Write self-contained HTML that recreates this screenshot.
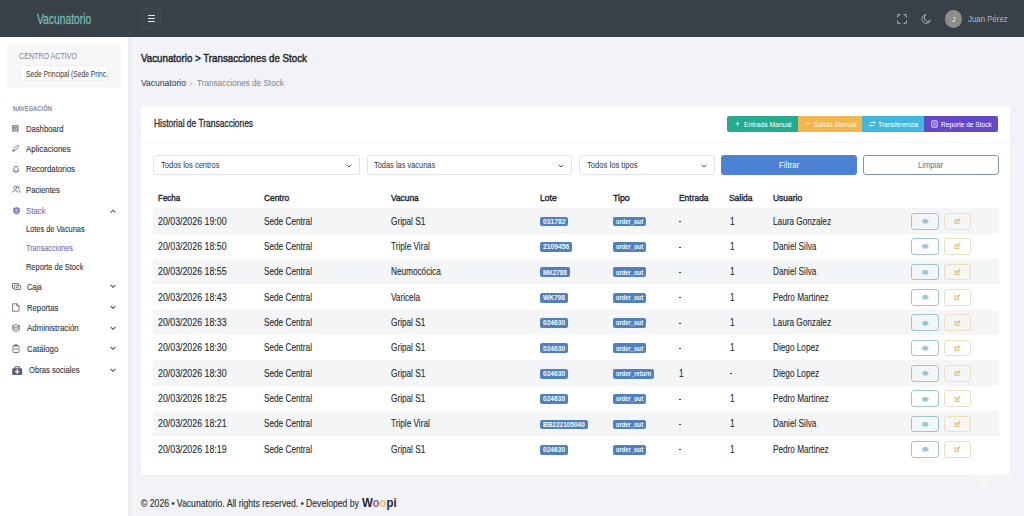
<!DOCTYPE html>
<html><head><meta charset="utf-8"><title>Vacunatorio - Transacciones de Stock</title>
<style>
html,body{margin:0;padding:0;width:1024px;height:516px;overflow:hidden;background:#f2f3f6;}
body{position:relative;font-family:"Liberation Sans",sans-serif;}
.t{position:absolute;white-space:nowrap;line-height:1;transform-origin:0 0;}
.b{position:absolute;box-sizing:border-box;}
svg.b{overflow:visible;}
</style></head><body>
<div class="b" style="left:0px;top:0px;width:1024px;height:37px;background:#38404a;"></div>
<div class="t" style="left:36.50px;top:12.23px;font-size:14.5px;color:#74bdac;-webkit-text-stroke:0.3px #74bdac;transform:scaleX(0.7116);">Vacunatorio</div>
<div class="b" style="left:141px;top:8px;width:20px;height:21px;background:#3a424c;border:1px solid #404852;border-radius:2px;box-sizing:border-box;"></div>
<div class="b" style="left:147.5px;top:14.9px;width:7px;height:1.2px;background:#e6e8ea;border-radius:1px;"></div>
<div class="b" style="left:147.5px;top:17.9px;width:7px;height:1.2px;background:#e6e8ea;border-radius:1px;"></div>
<div class="b" style="left:147.5px;top:20.9px;width:7px;height:1.2px;background:#e6e8ea;border-radius:1px;"></div>
<svg class="b" style="left:897px;top:13.6px" width="10" height="10" viewBox="0 0 10 10" fill="none" stroke="#a9aeb4" stroke-width="1.1" stroke-linecap="round">
<path d="M0.6 3V1.8Q0.6 0.6 1.8 0.6H3M7 0.6H8.2Q9.4 0.6 9.4 1.8V3M9.4 7V8.2Q9.4 9.4 8.2 9.4H7M3 9.4H1.8Q0.6 9.4 0.6 8.2V7"/></svg>
<svg class="b" style="left:921.4px;top:13.8px" width="10" height="10" viewBox="0 0 10 10" fill="none" stroke="#b3b8be" stroke-width="1.0">
<path d="M4.6 0.7A4.3 4.3 0 1 0 9.3 6.5A3.5 3.5 0 0 1 4.6 0.7Z"/></svg>
<div class="b" style="left:945px;top:10.3px;width:17.4px;height:17.4px;border-radius:50%;background:#8f8b88;"></div>
<div class="t" style="left:951.71px;top:15.95px;font-size:7.5px;color:#f5e6e2;-webkit-text-stroke:0.15px #f5e6e2;transform:scaleX(0.9000);">J</div>
<div class="t" style="left:967.70px;top:13.86px;font-size:9.5px;color:#b5bac1;transform:scaleX(0.8282);">Juan Pérez</div>
<div class="b" style="left:0px;top:37px;width:128px;height:479px;background:#ffffff;"></div>
<div class="b" style="left:128px;top:37px;width:5px;height:479px;background:linear-gradient(90deg,rgba(0,0,0,0.035),rgba(0,0,0,0));"></div>
<div class="b" style="left:7px;top:44px;width:114px;height:44px;background:#f6f7f9;border-radius:3px;"></div>
<div class="t" style="left:19.20px;top:52.86px;font-size:8.2px;color:#7c838b;transform:scaleX(0.8690);">CENTRO ACTIVO</div>
<div class="b" style="left:19.5px;top:65.3px;width:88.8px;height:16px;background:#ffffff;border:1px solid #eceef1;border-radius:2px;box-sizing:border-box;"></div>
<div class="t" style="left:25.70px;top:69.82px;font-size:8.6px;color:#30353b;transform:scaleX(0.7797);">Sede Principal (Sede Princ.</div>
<div class="t" style="left:12.70px;top:106.11px;font-size:6.6px;color:#80868d;letter-spacing:0.4px;-webkit-text-stroke:0.25px #80868d;transform:scaleX(0.8270);">NAVEGACIÓN</div>
<div class="t" style="left:26.40px;top:124.92px;font-size:8.6px;color:#2f343b;-webkit-text-stroke:0.1px #2f343b;transform:scaleX(0.8913);">Dashboard</div>
<div class="t" style="left:26.40px;top:145.02px;font-size:8.6px;color:#2f343b;-webkit-text-stroke:0.1px #2f343b;transform:scaleX(0.9278);">Aplicaciones</div>
<div class="t" style="left:26.40px;top:165.42px;font-size:8.6px;color:#2f343b;-webkit-text-stroke:0.1px #2f343b;transform:scaleX(0.9152);">Recordatorios</div>
<div class="t" style="left:26.40px;top:186.22px;font-size:8.6px;color:#2f343b;-webkit-text-stroke:0.1px #2f343b;transform:scaleX(0.9002);">Pacientes</div>
<div class="t" style="left:26.40px;top:206.92px;font-size:8.6px;color:#7670b0;-webkit-text-stroke:0.1px #7670b0;transform:scaleX(0.9159);">Stack</div>
<div class="t" style="left:26.40px;top:224.79px;font-size:8.4px;color:#2f343b;-webkit-text-stroke:0.1px #2f343b;transform:scaleX(0.8825);">Lotes de Vacunas</div>
<div class="t" style="left:26.40px;top:243.79px;font-size:8.4px;color:#7670b0;-webkit-text-stroke:0.1px #7670b0;transform:scaleX(0.8653);">Transacciones</div>
<div class="t" style="left:26.40px;top:262.69px;font-size:8.4px;color:#2f343b;-webkit-text-stroke:0.1px #2f343b;transform:scaleX(0.8875);">Reporte de Stock</div>
<div class="t" style="left:26.60px;top:282.92px;font-size:8.6px;color:#2f343b;-webkit-text-stroke:0.1px #2f343b;transform:scaleX(0.8424);">Caja</div>
<div class="t" style="left:26.60px;top:303.82px;font-size:8.6px;color:#2f343b;-webkit-text-stroke:0.1px #2f343b;transform:scaleX(0.8969);">Reportas</div>
<div class="t" style="left:26.60px;top:324.42px;font-size:8.6px;color:#2f343b;-webkit-text-stroke:0.1px #2f343b;transform:scaleX(0.9184);">Administración</div>
<div class="t" style="left:26.60px;top:345.22px;font-size:8.6px;color:#2f343b;-webkit-text-stroke:0.1px #2f343b;transform:scaleX(0.9092);">Catálogo</div>
<div class="t" style="left:28.80px;top:366.42px;font-size:8.6px;color:#2f343b;-webkit-text-stroke:0.1px #2f343b;transform:scaleX(0.8878);">Obras sociales</div>
<svg class="b" style="left:12.4px;top:124.9px" width="7" height="7" viewBox="0 0 7 7"><rect x="0" y="0" width="6.6" height="6.8" rx="0.7" fill="#8a8f95"/><path d="M1.5 1.6H5.1M1.5 3.4H2.6M3.8 3.4H5.1M1.5 5.2H5.1" stroke="#e6e8ea" stroke-width="0.7"/></svg>
<svg class="b" style="left:12px;top:144px" width="8" height="8" viewBox="0 0 8 8" fill="none" stroke="#6c7279" stroke-width="0.9" stroke-linecap="round" stroke-linejoin="round"><path d="M1 7L2 4.5L5.5 1L7 2.5L3.5 6Z M1 7L2.8 6.4"/></svg>
<svg class="b" style="left:12px;top:165px" width="8" height="8" viewBox="0 0 8 8" fill="none" stroke="#6c7279" stroke-width="0.9" stroke-linecap="round" stroke-linejoin="round"><path d="M1.2 6.2H6.8L6 5V3.3A2 2 0 0 0 2 3.3V5Z M3.2 7.2H4.8"/></svg>
<svg class="b" style="left:12px;top:185px" width="9" height="8" viewBox="0 0 9 8" fill="none" stroke="#6c7279" stroke-width="0.9" stroke-linecap="round" stroke-linejoin="round"><circle cx="3.3" cy="2.4" r="1.5"/><path d="M0.8 7.2A2.6 2.6 0 0 1 5.8 7.2"/><path d="M5.6 1A1.4 1.4 0 0 1 6 3.8M6.8 5A2.2 2.2 0 0 1 8.2 7.2"/></svg>
<svg class="b" style="left:12.5px;top:207px" width="7" height="7.5" viewBox="0 0 7 7.5"><path d="M3.5 0L6.8 1.3V4.2C6.8 6 5.2 7 3.5 7.5C1.8 7 0.2 6 0.2 4.2V1.3Z" fill="#8480c4"/><circle cx="3.5" cy="3.2" r="1.1" fill="#d4d0f0"/><path d="M1.8 5.4H5.2" stroke="#d4d0f0" stroke-width="0.7"/></svg>
<svg class="b" style="left:11.5px;top:282.5px" width="9" height="7" viewBox="0 0 9 7" fill="none" stroke="#6a6f75" stroke-width="0.9"><rect x="0.5" y="0.5" width="5.9" height="4.9" rx="0.5"/><rect x="2.3" y="2.2" width="6.2" height="4.3" rx="0.5" fill="#ffffff"/><circle cx="5.4" cy="4.35" r="0.9"/></svg>
<svg class="b" style="left:12px;top:303px" width="8" height="9" viewBox="0 0 8 9" fill="none" stroke="#6c7279" stroke-width="0.9" stroke-linecap="round" stroke-linejoin="round"><path d="M1 0.8H4.8L7 3V8.2H1Z M4.8 0.8V3H7"/></svg>
<svg class="b" style="left:12px;top:324px" width="8" height="8" viewBox="0 0 8 8" fill="none" stroke="#6c7279" stroke-width="0.9" stroke-linecap="round" stroke-linejoin="round"><ellipse cx="4" cy="2" rx="3.2" ry="1.3"/><path d="M0.8 2V6C0.8 6.8 2.2 7.3 4 7.3S7.2 6.8 7.2 6V2 M0.8 4C0.8 4.8 2.2 5.3 4 5.3S7.2 4.8 7.2 4"/></svg>
<svg class="b" style="left:12px;top:344px" width="8" height="9" viewBox="0 0 8 9" fill="none" stroke="#6c7279" stroke-width="0.9" stroke-linecap="round" stroke-linejoin="round"><rect x="1" y="1.5" width="6" height="7" rx="0.6"/><path d="M2.8 0.8H5.2V2.2H2.8Z M2.5 5H5.5"/></svg>
<svg class="b" style="left:11.8px;top:365.8px" width="10.4" height="9.2" viewBox="0 0 10.4 9.2"><path d="M2.4 2.2V1.2Q2.4 0.2 3.4 0.2H7Q8 0.2 8 1.2V2.2H9.4Q10.2 2.2 10.2 3V8.2Q10.2 9 9.4 9H1Q0.2 9 0.2 8.2V3Q0.2 2.2 1 2.2Z M3.4 1.2V2.2H7V1.2Z" fill="#5b606a" fill-rule="evenodd"/><path d="M5.2 3.3V8M3.1 5.65H7.3" stroke="#eef0f4" stroke-width="1.3"/></svg>
<svg class="b" style="left:109.5px;top:209.3px" width="6" height="4.5" viewBox="0 0 6 4.5" fill="none" stroke="#555b62" stroke-width="1.05" stroke-linecap="round" stroke-linejoin="round"><path d="M0.8 3.3L3 1.1L5.2 3.3"/></svg>
<svg class="b" style="left:109.5px;top:284.1px" width="6" height="4.5" viewBox="0 0 6 4.5" fill="none" stroke="#555b62" stroke-width="1.05" stroke-linecap="round" stroke-linejoin="round"><path d="M0.8 1.2L3 3.4L5.2 1.2"/></svg>
<svg class="b" style="left:109.5px;top:305.0px" width="6" height="4.5" viewBox="0 0 6 4.5" fill="none" stroke="#555b62" stroke-width="1.05" stroke-linecap="round" stroke-linejoin="round"><path d="M0.8 1.2L3 3.4L5.2 1.2"/></svg>
<svg class="b" style="left:109.5px;top:325.6px" width="6" height="4.5" viewBox="0 0 6 4.5" fill="none" stroke="#555b62" stroke-width="1.05" stroke-linecap="round" stroke-linejoin="round"><path d="M0.8 1.2L3 3.4L5.2 1.2"/></svg>
<svg class="b" style="left:109.5px;top:346.40000000000003px" width="6" height="4.5" viewBox="0 0 6 4.5" fill="none" stroke="#555b62" stroke-width="1.05" stroke-linecap="round" stroke-linejoin="round"><path d="M0.8 1.2L3 3.4L5.2 1.2"/></svg>
<svg class="b" style="left:109.5px;top:367.5px" width="6" height="4.5" viewBox="0 0 6 4.5" fill="none" stroke="#555b62" stroke-width="1.05" stroke-linecap="round" stroke-linejoin="round"><path d="M0.8 1.2L3 3.4L5.2 1.2"/></svg>
<div class="b" style="left:133px;top:37px;width:891px;height:479px;background:#f2f3f6;"></div>
<div class="t" style="left:140.80px;top:51.78px;font-size:11.6px;color:#23272d;-webkit-text-stroke:0.45px #23272d;transform:scaleX(0.8408);">Vacunatorio &gt; Transacciones de Stock</div>
<div class="t" style="left:140.80px;top:78.47px;font-size:9.6px;color:#30353b;transform:scaleX(0.8907);">Vacunatorio</div>
<div class="t" style="left:189.40px;top:79.85px;font-size:7.5px;color:#a3a9b0;transform:scaleX(0.8219);">&gt;</div>
<div class="t" style="left:197.40px;top:78.47px;font-size:9.6px;color:#7d848c;transform:scaleX(0.8512);">Transacciones de Stock</div>
<div class="b" style="left:140.6px;top:106px;width:869.9px;height:368.6px;background:#ffffff;border-radius:3px;box-shadow:0 0 2px rgba(0,0,0,0.03);"></div>
<div class="t" style="left:153.80px;top:119.37px;font-size:10.2px;color:#2a2e34;-webkit-text-stroke:0.3px #2a2e34;transform:scaleX(0.8293);">Historial de Transacciones</div>
<div class="b" style="left:140.6px;top:142px;width:869.9px;height:1px;background:#f3f4f6;"></div>
<div class="b" style="left:727.2px;top:116px;width:70.6px;height:15.8px;background:#27a98b;border-radius:2px 0 0 2px;"></div>
<div class="b" style="left:797.8px;top:116px;width:64.2px;height:15.8px;background:#f1b64f;"></div>
<div class="b" style="left:862px;top:116px;width:62px;height:15.8px;background:#42b7de;"></div>
<div class="b" style="left:924px;top:116px;width:74.4px;height:15.8px;background:#6349c6;border-radius:0 2px 2px 0;"></div>
<div class="t" style="left:735.00px;top:120.10px;font-size:8.5px;color:#ffffff;transform:scaleX(1.0073);">+</div>
<div class="t" style="left:743.60px;top:120.53px;font-size:8.0px;color:#ffffff;transform:scaleX(0.8427);">Entrada Manual</div>
<div class="b" style="left:805.5px;top:123.3px;width:4.5px;height:0.9px;background:#fff3dc;"></div>
<div class="t" style="left:813.60px;top:120.53px;font-size:8.0px;color:#fdf3e0;transform:scaleX(0.8363);">Salida Manual</div>
<svg class="b" style="left:868.5px;top:120.5px" width="7" height="6" viewBox="0 0 7 6" fill="none" stroke="#ffffff" stroke-width="0.8" stroke-linecap="round"><path d="M0.8 4.5H5M1.8 3.5L0.8 4.5L1.8 5.5M2 1.5H6.2M5.2 0.5L6.2 1.5L5.2 2.5"/></svg>
<div class="t" style="left:878.00px;top:120.53px;font-size:8.0px;color:#ffffff;transform:scaleX(0.8269);">Transferencia</div>
<svg class="b" style="left:930.5px;top:119.8px" width="7" height="8" viewBox="0 0 7 8" fill="none" stroke="#ffffff" stroke-width="0.8"><rect x="0.8" y="0.8" width="5.4" height="6.4" rx="0.6"/><path d="M2.2 3H4.8M2.2 5H4.8"/></svg>
<div class="t" style="left:941.00px;top:120.53px;font-size:8.0px;color:#ffffff;transform:scaleX(0.8218);">Reporte de Stock</div>
<div class="b" style="left:153.2px;top:155.2px;width:206.5px;height:19.5px;background:#ffffff;border:1px solid #dfe2e6;border-radius:3px;box-sizing:border-box;"></div>
<div class="t" style="left:160.50px;top:161.32px;font-size:8.6px;color:#30353b;transform:scaleX(0.8756);">Todos los centros</div>
<svg class="b" style="left:346.2px;top:163.5px" width="6" height="4" viewBox="0 0 6 4" fill="none" stroke="#3a3f45" stroke-width="0.9" stroke-linecap="round" stroke-linejoin="round"><path d="M1 1L3 3L5 1"/></svg>
<div class="b" style="left:366.5px;top:155.2px;width:205.3px;height:19.5px;background:#ffffff;border:1px solid #dfe2e6;border-radius:3px;box-sizing:border-box;"></div>
<div class="t" style="left:373.80px;top:161.32px;font-size:8.6px;color:#30353b;transform:scaleX(0.8650);">Todas las vacunas</div>
<svg class="b" style="left:558.3px;top:163.5px" width="6" height="4" viewBox="0 0 6 4" fill="none" stroke="#3a3f45" stroke-width="0.9" stroke-linecap="round" stroke-linejoin="round"><path d="M1 1L3 3L5 1"/></svg>
<div class="b" style="left:579.2px;top:155.2px;width:135.6px;height:19.5px;background:#ffffff;border:1px solid #dfe2e6;border-radius:3px;box-sizing:border-box;"></div>
<div class="t" style="left:586.50px;top:161.32px;font-size:8.6px;color:#30353b;transform:scaleX(0.8877);">Todos los tipos</div>
<svg class="b" style="left:701.3px;top:163.5px" width="6" height="4" viewBox="0 0 6 4" fill="none" stroke="#3a3f45" stroke-width="0.9" stroke-linecap="round" stroke-linejoin="round"><path d="M1 1L3 3L5 1"/></svg>
<div class="b" style="left:721.2px;top:155.1px;width:135.4px;height:19.8px;background:#4c82d2;border-radius:3px;"></div>
<div class="t" style="left:778.70px;top:161.45px;font-size:8.8px;color:#ffffff;transform:scaleX(0.9072);">Filtrar</div>
<div class="b" style="left:863.1px;top:155.1px;width:135.7px;height:19.8px;background:#ffffff;border:1px solid #7f96a8;border-radius:3px;box-sizing:border-box;"></div>
<div class="t" style="left:918.00px;top:161.45px;font-size:8.8px;color:#6a8396;-webkit-text-stroke:0.1px #6a8396;transform:scaleX(0.8664);">Limpiar</div>
<div class="t" style="left:157.70px;top:193.04px;font-size:9.4px;color:#24282e;-webkit-text-stroke:0.4px #24282e;transform:scaleX(0.8536);">Fecha</div>
<div class="t" style="left:263.60px;top:193.04px;font-size:9.4px;color:#24282e;-webkit-text-stroke:0.4px #24282e;transform:scaleX(0.8932);">Centro</div>
<div class="t" style="left:390.50px;top:193.04px;font-size:9.4px;color:#24282e;-webkit-text-stroke:0.4px #24282e;transform:scaleX(0.8915);">Vacuna</div>
<div class="t" style="left:540.30px;top:193.04px;font-size:9.4px;color:#24282e;-webkit-text-stroke:0.4px #24282e;transform:scaleX(0.9128);">Lote</div>
<div class="t" style="left:612.90px;top:193.04px;font-size:9.4px;color:#24282e;-webkit-text-stroke:0.4px #24282e;transform:scaleX(0.9310);">Tipo</div>
<div class="t" style="left:678.50px;top:193.04px;font-size:9.4px;color:#24282e;-webkit-text-stroke:0.4px #24282e;transform:scaleX(0.8990);">Entrada</div>
<div class="t" style="left:729.20px;top:193.04px;font-size:9.4px;color:#24282e;-webkit-text-stroke:0.4px #24282e;transform:scaleX(0.8993);">Salida</div>
<div class="t" style="left:772.60px;top:193.04px;font-size:9.4px;color:#24282e;-webkit-text-stroke:0.4px #24282e;transform:scaleX(0.9045);">Usuario</div>
<div class="b" style="left:153.4px;top:208.2px;width:845.4px;height:25.35px;background:#f4f5f7;"></div>
<div class="t" style="left:157.60px;top:216.60px;font-size:10.4px;color:#24282d;-webkit-text-stroke:0.1px #24282d;transform:scaleX(0.8473);">20/03/2026 19:00</div>
<div class="t" style="left:263.70px;top:216.60px;font-size:10.4px;color:#24282d;-webkit-text-stroke:0.1px #24282d;transform:scaleX(0.7907);">Sede Central</div>
<div class="t" style="left:390.70px;top:216.60px;font-size:10.4px;color:#24282d;-webkit-text-stroke:0.1px #24282d;transform:scaleX(0.7907);">Gripal S1</div>
<div class="b" style="left:539.8px;top:216.7px;width:28.4px;height:9.8px;background:#5181bc;border-radius:2px;"></div>
<div class="t" style="left:542.80px;top:218.94px;font-size:6.8px;color:#f4f8ff;font-weight:bold;transform:scaleX(0.9871);">031782</div>
<div class="b" style="left:612.6px;top:216.7px;width:33.1px;height:9.8px;background:#5181bc;border-radius:2px;"></div>
<div class="t" style="left:615.60px;top:218.94px;font-size:6.8px;color:#f4f8ff;font-weight:bold;transform:scaleX(0.8539);">order_out</div>
<div class="b" style="left:678.8px;top:221.3px;width:2.4px;height:0.8px;background:#33373d;"></div>
<div class="t" style="left:729.60px;top:216.60px;font-size:10.4px;color:#24282d;-webkit-text-stroke:0.1px #24282d;transform:scaleX(0.7907);">1</div>
<div class="t" style="left:772.70px;top:216.60px;font-size:10.4px;color:#24282d;-webkit-text-stroke:0.1px #24282d;transform:scaleX(0.7907);">Laura Gonzalez</div>
<div class="b" style="left:911.3px;top:212.8px;width:27.5px;height:16.8px;border:1px solid #9dc6d1;border-radius:3px;box-sizing:border-box;"></div>
<svg class="b" style="left:921.8px;top:219.10px" width="6.6" height="4.6" viewBox="0 0 6.6 4.6"><ellipse cx="3.3" cy="2.3" rx="2.9" ry="1.9" fill="#b5dbe5" stroke="#72b3c6" stroke-width="0.7"/><circle cx="3.3" cy="2.3" r="1.0" fill="#72b3c6"/></svg>
<div class="b" style="left:944.3px;top:212.8px;width:26.3px;height:16.8px;border:1px solid #eee0bd;border-radius:3px;box-sizing:border-box;"></div>
<svg class="b" style="left:954.2px;top:218.10px" width="7" height="6.2" viewBox="0 0 7 6.2"><path d="M0.4 1.2H3.6L2.4 2.4H1.5V4.9H4.2V4L5.3 2.9V6H0.4Z" fill="#e6c37a"/><path d="M2.4 4.0L2.7 3.0L5.9 0.1L6.7 0.9L3.5 4.0Z" fill="#e0b45a"/></svg>
<div class="t" style="left:157.60px;top:241.95px;font-size:10.4px;color:#24282d;-webkit-text-stroke:0.1px #24282d;transform:scaleX(0.8473);">20/03/2026 18:50</div>
<div class="t" style="left:263.70px;top:241.95px;font-size:10.4px;color:#24282d;-webkit-text-stroke:0.1px #24282d;transform:scaleX(0.7907);">Sede Central</div>
<div class="t" style="left:390.70px;top:241.95px;font-size:10.4px;color:#24282d;-webkit-text-stroke:0.1px #24282d;transform:scaleX(0.7907);">Triple Viral</div>
<div class="b" style="left:539.8px;top:242.05px;width:32.2px;height:9.8px;background:#5181bc;border-radius:2px;"></div>
<div class="t" style="left:542.80px;top:244.29px;font-size:6.8px;color:#f4f8ff;font-weight:bold;transform:scaleX(0.9897);">2109456</div>
<div class="b" style="left:612.6px;top:242.05px;width:33.1px;height:9.8px;background:#5181bc;border-radius:2px;"></div>
<div class="t" style="left:615.60px;top:244.29px;font-size:6.8px;color:#f4f8ff;font-weight:bold;transform:scaleX(0.8539);">order_out</div>
<div class="b" style="left:678.8px;top:246.65px;width:2.4px;height:0.8px;background:#33373d;"></div>
<div class="t" style="left:729.60px;top:241.95px;font-size:10.4px;color:#24282d;-webkit-text-stroke:0.1px #24282d;transform:scaleX(0.7907);">1</div>
<div class="t" style="left:772.70px;top:241.95px;font-size:10.4px;color:#24282d;-webkit-text-stroke:0.1px #24282d;transform:scaleX(0.7907);">Daniel Silva</div>
<div class="b" style="left:911.3px;top:238.15px;width:27.5px;height:16.8px;border:1px solid #9dc6d1;border-radius:3px;box-sizing:border-box;"></div>
<svg class="b" style="left:921.8px;top:244.45px" width="6.6" height="4.6" viewBox="0 0 6.6 4.6"><ellipse cx="3.3" cy="2.3" rx="2.9" ry="1.9" fill="#b5dbe5" stroke="#72b3c6" stroke-width="0.7"/><circle cx="3.3" cy="2.3" r="1.0" fill="#72b3c6"/></svg>
<div class="b" style="left:944.3px;top:238.15px;width:26.3px;height:16.8px;border:1px solid #eee0bd;border-radius:3px;box-sizing:border-box;"></div>
<svg class="b" style="left:954.2px;top:243.45px" width="7" height="6.2" viewBox="0 0 7 6.2"><path d="M0.4 1.2H3.6L2.4 2.4H1.5V4.9H4.2V4L5.3 2.9V6H0.4Z" fill="#e6c37a"/><path d="M2.4 4.0L2.7 3.0L5.9 0.1L6.7 0.9L3.5 4.0Z" fill="#e0b45a"/></svg>
<div class="b" style="left:153.4px;top:258.9px;width:845.4px;height:25.35px;background:#f4f5f7;"></div>
<div class="t" style="left:157.60px;top:267.30px;font-size:10.4px;color:#24282d;-webkit-text-stroke:0.1px #24282d;transform:scaleX(0.8473);">20/03/2026 18:55</div>
<div class="t" style="left:263.70px;top:267.30px;font-size:10.4px;color:#24282d;-webkit-text-stroke:0.1px #24282d;transform:scaleX(0.7907);">Sede Central</div>
<div class="t" style="left:390.70px;top:267.30px;font-size:10.4px;color:#24282d;-webkit-text-stroke:0.1px #24282d;transform:scaleX(0.7907);">Neumocócica</div>
<div class="b" style="left:539.8px;top:267.4px;width:29.9px;height:9.8px;background:#5181bc;border-radius:2px;"></div>
<div class="t" style="left:542.80px;top:269.64px;font-size:6.8px;color:#f4f8ff;font-weight:bold;transform:scaleX(0.9298);">MK2788</div>
<div class="b" style="left:612.6px;top:267.4px;width:33.1px;height:9.8px;background:#5181bc;border-radius:2px;"></div>
<div class="t" style="left:615.60px;top:269.64px;font-size:6.8px;color:#f4f8ff;font-weight:bold;transform:scaleX(0.8539);">order_out</div>
<div class="b" style="left:678.8px;top:272px;width:2.4px;height:0.8px;background:#33373d;"></div>
<div class="t" style="left:729.60px;top:267.30px;font-size:10.4px;color:#24282d;-webkit-text-stroke:0.1px #24282d;transform:scaleX(0.7907);">1</div>
<div class="t" style="left:772.70px;top:267.30px;font-size:10.4px;color:#24282d;-webkit-text-stroke:0.1px #24282d;transform:scaleX(0.7907);">Daniel Silva</div>
<div class="b" style="left:911.3px;top:263.5px;width:27.5px;height:16.8px;border:1px solid #9dc6d1;border-radius:3px;box-sizing:border-box;"></div>
<svg class="b" style="left:921.8px;top:269.80px" width="6.6" height="4.6" viewBox="0 0 6.6 4.6"><ellipse cx="3.3" cy="2.3" rx="2.9" ry="1.9" fill="#b5dbe5" stroke="#72b3c6" stroke-width="0.7"/><circle cx="3.3" cy="2.3" r="1.0" fill="#72b3c6"/></svg>
<div class="b" style="left:944.3px;top:263.5px;width:26.3px;height:16.8px;border:1px solid #eee0bd;border-radius:3px;box-sizing:border-box;"></div>
<svg class="b" style="left:954.2px;top:268.80px" width="7" height="6.2" viewBox="0 0 7 6.2"><path d="M0.4 1.2H3.6L2.4 2.4H1.5V4.9H4.2V4L5.3 2.9V6H0.4Z" fill="#e6c37a"/><path d="M2.4 4.0L2.7 3.0L5.9 0.1L6.7 0.9L3.5 4.0Z" fill="#e0b45a"/></svg>
<div class="t" style="left:157.60px;top:292.65px;font-size:10.4px;color:#24282d;-webkit-text-stroke:0.1px #24282d;transform:scaleX(0.8473);">20/03/2026 18:43</div>
<div class="t" style="left:263.70px;top:292.65px;font-size:10.4px;color:#24282d;-webkit-text-stroke:0.1px #24282d;transform:scaleX(0.7907);">Sede Central</div>
<div class="t" style="left:390.70px;top:292.65px;font-size:10.4px;color:#24282d;-webkit-text-stroke:0.1px #24282d;transform:scaleX(0.7907);">Varicela</div>
<div class="b" style="left:539.8px;top:292.75px;width:27.9px;height:9.8px;background:#5181bc;border-radius:2px;"></div>
<div class="t" style="left:542.80px;top:294.99px;font-size:6.8px;color:#f4f8ff;font-weight:bold;transform:scaleX(0.9658);">WK798</div>
<div class="b" style="left:612.6px;top:292.75px;width:33.1px;height:9.8px;background:#5181bc;border-radius:2px;"></div>
<div class="t" style="left:615.60px;top:294.99px;font-size:6.8px;color:#f4f8ff;font-weight:bold;transform:scaleX(0.8539);">order_out</div>
<div class="b" style="left:678.8px;top:297.35px;width:2.4px;height:0.8px;background:#33373d;"></div>
<div class="t" style="left:729.60px;top:292.65px;font-size:10.4px;color:#24282d;-webkit-text-stroke:0.1px #24282d;transform:scaleX(0.7907);">1</div>
<div class="t" style="left:772.70px;top:292.65px;font-size:10.4px;color:#24282d;-webkit-text-stroke:0.1px #24282d;transform:scaleX(0.7907);">Pedro Martinez</div>
<div class="b" style="left:911.3px;top:288.85px;width:27.5px;height:16.8px;border:1px solid #9dc6d1;border-radius:3px;box-sizing:border-box;"></div>
<svg class="b" style="left:921.8px;top:295.15px" width="6.6" height="4.6" viewBox="0 0 6.6 4.6"><ellipse cx="3.3" cy="2.3" rx="2.9" ry="1.9" fill="#b5dbe5" stroke="#72b3c6" stroke-width="0.7"/><circle cx="3.3" cy="2.3" r="1.0" fill="#72b3c6"/></svg>
<div class="b" style="left:944.3px;top:288.85px;width:26.3px;height:16.8px;border:1px solid #eee0bd;border-radius:3px;box-sizing:border-box;"></div>
<svg class="b" style="left:954.2px;top:294.15px" width="7" height="6.2" viewBox="0 0 7 6.2"><path d="M0.4 1.2H3.6L2.4 2.4H1.5V4.9H4.2V4L5.3 2.9V6H0.4Z" fill="#e6c37a"/><path d="M2.4 4.0L2.7 3.0L5.9 0.1L6.7 0.9L3.5 4.0Z" fill="#e0b45a"/></svg>
<div class="b" style="left:153.4px;top:309.6px;width:845.4px;height:25.35px;background:#f4f5f7;"></div>
<div class="t" style="left:157.60px;top:318.00px;font-size:10.4px;color:#24282d;-webkit-text-stroke:0.1px #24282d;transform:scaleX(0.8473);">20/03/2026 18:33</div>
<div class="t" style="left:263.70px;top:318.00px;font-size:10.4px;color:#24282d;-webkit-text-stroke:0.1px #24282d;transform:scaleX(0.7907);">Sede Central</div>
<div class="t" style="left:390.70px;top:318.00px;font-size:10.4px;color:#24282d;-webkit-text-stroke:0.1px #24282d;transform:scaleX(0.7907);">Gripal S1</div>
<div class="b" style="left:539.8px;top:318.1px;width:28.1px;height:9.8px;background:#5181bc;border-radius:2px;"></div>
<div class="t" style="left:542.80px;top:320.34px;font-size:6.8px;color:#f4f8ff;font-weight:bold;transform:scaleX(0.9739);">024630</div>
<div class="b" style="left:612.6px;top:318.1px;width:33.1px;height:9.8px;background:#5181bc;border-radius:2px;"></div>
<div class="t" style="left:615.60px;top:320.34px;font-size:6.8px;color:#f4f8ff;font-weight:bold;transform:scaleX(0.8539);">order_out</div>
<div class="b" style="left:678.8px;top:322.7px;width:2.4px;height:0.8px;background:#33373d;"></div>
<div class="t" style="left:729.60px;top:318.00px;font-size:10.4px;color:#24282d;-webkit-text-stroke:0.1px #24282d;transform:scaleX(0.7907);">1</div>
<div class="t" style="left:772.70px;top:318.00px;font-size:10.4px;color:#24282d;-webkit-text-stroke:0.1px #24282d;transform:scaleX(0.7907);">Laura Gonzalez</div>
<div class="b" style="left:911.3px;top:314.2px;width:27.5px;height:16.8px;border:1px solid #9dc6d1;border-radius:3px;box-sizing:border-box;"></div>
<svg class="b" style="left:921.8px;top:320.50px" width="6.6" height="4.6" viewBox="0 0 6.6 4.6"><ellipse cx="3.3" cy="2.3" rx="2.9" ry="1.9" fill="#b5dbe5" stroke="#72b3c6" stroke-width="0.7"/><circle cx="3.3" cy="2.3" r="1.0" fill="#72b3c6"/></svg>
<div class="b" style="left:944.3px;top:314.2px;width:26.3px;height:16.8px;border:1px solid #eee0bd;border-radius:3px;box-sizing:border-box;"></div>
<svg class="b" style="left:954.2px;top:319.50px" width="7" height="6.2" viewBox="0 0 7 6.2"><path d="M0.4 1.2H3.6L2.4 2.4H1.5V4.9H4.2V4L5.3 2.9V6H0.4Z" fill="#e6c37a"/><path d="M2.4 4.0L2.7 3.0L5.9 0.1L6.7 0.9L3.5 4.0Z" fill="#e0b45a"/></svg>
<div class="t" style="left:157.60px;top:343.35px;font-size:10.4px;color:#24282d;-webkit-text-stroke:0.1px #24282d;transform:scaleX(0.8473);">20/03/2026 18:30</div>
<div class="t" style="left:263.70px;top:343.35px;font-size:10.4px;color:#24282d;-webkit-text-stroke:0.1px #24282d;transform:scaleX(0.7907);">Sede Central</div>
<div class="t" style="left:390.70px;top:343.35px;font-size:10.4px;color:#24282d;-webkit-text-stroke:0.1px #24282d;transform:scaleX(0.7907);">Gripal S1</div>
<div class="b" style="left:539.8px;top:343.45px;width:28.1px;height:9.8px;background:#5181bc;border-radius:2px;"></div>
<div class="t" style="left:542.80px;top:345.69px;font-size:6.8px;color:#f4f8ff;font-weight:bold;transform:scaleX(0.9739);">024630</div>
<div class="b" style="left:612.6px;top:343.45px;width:33.1px;height:9.8px;background:#5181bc;border-radius:2px;"></div>
<div class="t" style="left:615.60px;top:345.69px;font-size:6.8px;color:#f4f8ff;font-weight:bold;transform:scaleX(0.8539);">order_out</div>
<div class="b" style="left:678.8px;top:348.05px;width:2.4px;height:0.8px;background:#33373d;"></div>
<div class="t" style="left:729.60px;top:343.35px;font-size:10.4px;color:#24282d;-webkit-text-stroke:0.1px #24282d;transform:scaleX(0.7907);">1</div>
<div class="t" style="left:772.70px;top:343.35px;font-size:10.4px;color:#24282d;-webkit-text-stroke:0.1px #24282d;transform:scaleX(0.7907);">Diego Lopez</div>
<div class="b" style="left:911.3px;top:339.55px;width:27.5px;height:16.8px;border:1px solid #9dc6d1;border-radius:3px;box-sizing:border-box;"></div>
<svg class="b" style="left:921.8px;top:345.85px" width="6.6" height="4.6" viewBox="0 0 6.6 4.6"><ellipse cx="3.3" cy="2.3" rx="2.9" ry="1.9" fill="#b5dbe5" stroke="#72b3c6" stroke-width="0.7"/><circle cx="3.3" cy="2.3" r="1.0" fill="#72b3c6"/></svg>
<div class="b" style="left:944.3px;top:339.55px;width:26.3px;height:16.8px;border:1px solid #eee0bd;border-radius:3px;box-sizing:border-box;"></div>
<svg class="b" style="left:954.2px;top:344.85px" width="7" height="6.2" viewBox="0 0 7 6.2"><path d="M0.4 1.2H3.6L2.4 2.4H1.5V4.9H4.2V4L5.3 2.9V6H0.4Z" fill="#e6c37a"/><path d="M2.4 4.0L2.7 3.0L5.9 0.1L6.7 0.9L3.5 4.0Z" fill="#e0b45a"/></svg>
<div class="b" style="left:153.4px;top:360.3px;width:845.4px;height:25.35px;background:#f4f5f7;"></div>
<div class="t" style="left:157.60px;top:368.70px;font-size:10.4px;color:#24282d;-webkit-text-stroke:0.1px #24282d;transform:scaleX(0.8473);">20/03/2026 18:30</div>
<div class="t" style="left:263.70px;top:368.70px;font-size:10.4px;color:#24282d;-webkit-text-stroke:0.1px #24282d;transform:scaleX(0.7907);">Sede Central</div>
<div class="t" style="left:390.70px;top:368.70px;font-size:10.4px;color:#24282d;-webkit-text-stroke:0.1px #24282d;transform:scaleX(0.7907);">Gripal S1</div>
<div class="b" style="left:539.8px;top:368.8px;width:28.1px;height:9.8px;background:#5181bc;border-radius:2px;"></div>
<div class="t" style="left:542.80px;top:371.04px;font-size:6.8px;color:#f4f8ff;font-weight:bold;transform:scaleX(0.9739);">024630</div>
<div class="b" style="left:612.6px;top:368.8px;width:41.2px;height:9.8px;background:#5181bc;border-radius:2px;"></div>
<div class="t" style="left:615.60px;top:371.04px;font-size:6.8px;color:#f4f8ff;font-weight:bold;transform:scaleX(0.8625);">order_return</div>
<div class="t" style="left:678.80px;top:368.70px;font-size:10.4px;color:#24282d;-webkit-text-stroke:0.1px #24282d;transform:scaleX(0.7907);">1</div>
<div class="b" style="left:729.6px;top:373.4px;width:2.4px;height:0.8px;background:#33373d;"></div>
<div class="t" style="left:772.70px;top:368.70px;font-size:10.4px;color:#24282d;-webkit-text-stroke:0.1px #24282d;transform:scaleX(0.7907);">Diego Lopez</div>
<div class="b" style="left:911.3px;top:364.9px;width:27.5px;height:16.8px;border:1px solid #9dc6d1;border-radius:3px;box-sizing:border-box;"></div>
<svg class="b" style="left:921.8px;top:371.20px" width="6.6" height="4.6" viewBox="0 0 6.6 4.6"><ellipse cx="3.3" cy="2.3" rx="2.9" ry="1.9" fill="#b5dbe5" stroke="#72b3c6" stroke-width="0.7"/><circle cx="3.3" cy="2.3" r="1.0" fill="#72b3c6"/></svg>
<div class="b" style="left:944.3px;top:364.9px;width:26.3px;height:16.8px;border:1px solid #eee0bd;border-radius:3px;box-sizing:border-box;"></div>
<svg class="b" style="left:954.2px;top:370.20px" width="7" height="6.2" viewBox="0 0 7 6.2"><path d="M0.4 1.2H3.6L2.4 2.4H1.5V4.9H4.2V4L5.3 2.9V6H0.4Z" fill="#e6c37a"/><path d="M2.4 4.0L2.7 3.0L5.9 0.1L6.7 0.9L3.5 4.0Z" fill="#e0b45a"/></svg>
<div class="t" style="left:157.60px;top:394.05px;font-size:10.4px;color:#24282d;-webkit-text-stroke:0.1px #24282d;transform:scaleX(0.8473);">20/03/2026 18:25</div>
<div class="t" style="left:263.70px;top:394.05px;font-size:10.4px;color:#24282d;-webkit-text-stroke:0.1px #24282d;transform:scaleX(0.7907);">Sede Central</div>
<div class="t" style="left:390.70px;top:394.05px;font-size:10.4px;color:#24282d;-webkit-text-stroke:0.1px #24282d;transform:scaleX(0.7907);">Gripal S1</div>
<div class="b" style="left:539.8px;top:394.15px;width:28.1px;height:9.8px;background:#5181bc;border-radius:2px;"></div>
<div class="t" style="left:542.80px;top:396.39px;font-size:6.8px;color:#f4f8ff;font-weight:bold;transform:scaleX(0.9739);">024630</div>
<div class="b" style="left:612.6px;top:394.15px;width:33.1px;height:9.8px;background:#5181bc;border-radius:2px;"></div>
<div class="t" style="left:615.60px;top:396.39px;font-size:6.8px;color:#f4f8ff;font-weight:bold;transform:scaleX(0.8539);">order_out</div>
<div class="b" style="left:678.8px;top:398.75px;width:2.4px;height:0.8px;background:#33373d;"></div>
<div class="t" style="left:729.60px;top:394.05px;font-size:10.4px;color:#24282d;-webkit-text-stroke:0.1px #24282d;transform:scaleX(0.7907);">1</div>
<div class="t" style="left:772.70px;top:394.05px;font-size:10.4px;color:#24282d;-webkit-text-stroke:0.1px #24282d;transform:scaleX(0.7907);">Pedro Martinez</div>
<div class="b" style="left:911.3px;top:390.25px;width:27.5px;height:16.8px;border:1px solid #9dc6d1;border-radius:3px;box-sizing:border-box;"></div>
<svg class="b" style="left:921.8px;top:396.55px" width="6.6" height="4.6" viewBox="0 0 6.6 4.6"><ellipse cx="3.3" cy="2.3" rx="2.9" ry="1.9" fill="#b5dbe5" stroke="#72b3c6" stroke-width="0.7"/><circle cx="3.3" cy="2.3" r="1.0" fill="#72b3c6"/></svg>
<div class="b" style="left:944.3px;top:390.25px;width:26.3px;height:16.8px;border:1px solid #eee0bd;border-radius:3px;box-sizing:border-box;"></div>
<svg class="b" style="left:954.2px;top:395.55px" width="7" height="6.2" viewBox="0 0 7 6.2"><path d="M0.4 1.2H3.6L2.4 2.4H1.5V4.9H4.2V4L5.3 2.9V6H0.4Z" fill="#e6c37a"/><path d="M2.4 4.0L2.7 3.0L5.9 0.1L6.7 0.9L3.5 4.0Z" fill="#e0b45a"/></svg>
<div class="b" style="left:153.4px;top:411px;width:845.4px;height:25.35px;background:#f4f5f7;"></div>
<div class="t" style="left:157.60px;top:419.40px;font-size:10.4px;color:#24282d;-webkit-text-stroke:0.1px #24282d;transform:scaleX(0.8473);">20/03/2026 18:21</div>
<div class="t" style="left:263.70px;top:419.40px;font-size:10.4px;color:#24282d;-webkit-text-stroke:0.1px #24282d;transform:scaleX(0.7907);">Sede Central</div>
<div class="t" style="left:390.70px;top:419.40px;font-size:10.4px;color:#24282d;-webkit-text-stroke:0.1px #24282d;transform:scaleX(0.7907);">Triple Viral</div>
<div class="b" style="left:539.8px;top:419.5px;width:47.8px;height:9.8px;background:#5181bc;border-radius:2px;"></div>
<div class="t" style="left:542.80px;top:421.74px;font-size:6.8px;color:#f4f8ff;font-weight:bold;transform:scaleX(0.9530);">BB222105040</div>
<div class="b" style="left:612.6px;top:419.5px;width:33.1px;height:9.8px;background:#5181bc;border-radius:2px;"></div>
<div class="t" style="left:615.60px;top:421.74px;font-size:6.8px;color:#f4f8ff;font-weight:bold;transform:scaleX(0.8539);">order_out</div>
<div class="b" style="left:678.8px;top:424.1px;width:2.4px;height:0.8px;background:#33373d;"></div>
<div class="t" style="left:729.60px;top:419.40px;font-size:10.4px;color:#24282d;-webkit-text-stroke:0.1px #24282d;transform:scaleX(0.7907);">1</div>
<div class="t" style="left:772.70px;top:419.40px;font-size:10.4px;color:#24282d;-webkit-text-stroke:0.1px #24282d;transform:scaleX(0.7907);">Daniel Silva</div>
<div class="b" style="left:911.3px;top:415.6px;width:27.5px;height:16.8px;border:1px solid #9dc6d1;border-radius:3px;box-sizing:border-box;"></div>
<svg class="b" style="left:921.8px;top:421.90px" width="6.6" height="4.6" viewBox="0 0 6.6 4.6"><ellipse cx="3.3" cy="2.3" rx="2.9" ry="1.9" fill="#b5dbe5" stroke="#72b3c6" stroke-width="0.7"/><circle cx="3.3" cy="2.3" r="1.0" fill="#72b3c6"/></svg>
<div class="b" style="left:944.3px;top:415.6px;width:26.3px;height:16.8px;border:1px solid #eee0bd;border-radius:3px;box-sizing:border-box;"></div>
<svg class="b" style="left:954.2px;top:420.90px" width="7" height="6.2" viewBox="0 0 7 6.2"><path d="M0.4 1.2H3.6L2.4 2.4H1.5V4.9H4.2V4L5.3 2.9V6H0.4Z" fill="#e6c37a"/><path d="M2.4 4.0L2.7 3.0L5.9 0.1L6.7 0.9L3.5 4.0Z" fill="#e0b45a"/></svg>
<div class="t" style="left:157.60px;top:444.75px;font-size:10.4px;color:#24282d;-webkit-text-stroke:0.1px #24282d;transform:scaleX(0.8473);">20/03/2026 18:19</div>
<div class="t" style="left:263.70px;top:444.75px;font-size:10.4px;color:#24282d;-webkit-text-stroke:0.1px #24282d;transform:scaleX(0.7907);">Sede Central</div>
<div class="t" style="left:390.70px;top:444.75px;font-size:10.4px;color:#24282d;-webkit-text-stroke:0.1px #24282d;transform:scaleX(0.7907);">Gripal S1</div>
<div class="b" style="left:539.8px;top:444.85px;width:28.1px;height:9.8px;background:#5181bc;border-radius:2px;"></div>
<div class="t" style="left:542.80px;top:447.09px;font-size:6.8px;color:#f4f8ff;font-weight:bold;transform:scaleX(0.9739);">024630</div>
<div class="b" style="left:612.6px;top:444.85px;width:33.1px;height:9.8px;background:#5181bc;border-radius:2px;"></div>
<div class="t" style="left:615.60px;top:447.09px;font-size:6.8px;color:#f4f8ff;font-weight:bold;transform:scaleX(0.8539);">order_out</div>
<div class="b" style="left:678.8px;top:449.45px;width:2.4px;height:0.8px;background:#33373d;"></div>
<div class="t" style="left:729.60px;top:444.75px;font-size:10.4px;color:#24282d;-webkit-text-stroke:0.1px #24282d;transform:scaleX(0.7907);">1</div>
<div class="t" style="left:772.70px;top:444.75px;font-size:10.4px;color:#24282d;-webkit-text-stroke:0.1px #24282d;transform:scaleX(0.7907);">Pedro Martinez</div>
<div class="b" style="left:911.3px;top:440.95px;width:27.5px;height:16.8px;border:1px solid #9dc6d1;border-radius:3px;box-sizing:border-box;"></div>
<svg class="b" style="left:921.8px;top:447.25px" width="6.6" height="4.6" viewBox="0 0 6.6 4.6"><ellipse cx="3.3" cy="2.3" rx="2.9" ry="1.9" fill="#b5dbe5" stroke="#72b3c6" stroke-width="0.7"/><circle cx="3.3" cy="2.3" r="1.0" fill="#72b3c6"/></svg>
<div class="b" style="left:944.3px;top:440.95px;width:26.3px;height:16.8px;border:1px solid #eee0bd;border-radius:3px;box-sizing:border-box;"></div>
<svg class="b" style="left:954.2px;top:446.25px" width="7" height="6.2" viewBox="0 0 7 6.2"><path d="M0.4 1.2H3.6L2.4 2.4H1.5V4.9H4.2V4L5.3 2.9V6H0.4Z" fill="#e6c37a"/><path d="M2.4 4.0L2.7 3.0L5.9 0.1L6.7 0.9L3.5 4.0Z" fill="#e0b45a"/></svg>
<svg class="b" style="left:973px;top:474px" width="22" height="17" viewBox="0 0 22 17"><path d="M0 0H22L11 16Z" fill="#f6f7f9"/></svg>
<div class="t" style="left:141.00px;top:498.67px;font-size:10.2px;color:#2c3036;-webkit-text-stroke:0.15px #2c3036;transform:scaleX(0.8485);">© 2026 • Vacunatorio. All rights reserved. • Developed by</div>
<div class="t" style="left:362px;top:497.44px;font-size:12px;font-weight:bold;color:#1f2342;transform:scaleX(0.95);">W<span style="color:#a4607f">o</span><span style="color:#e6bf72">o</span>pi</div>
</body></html>
